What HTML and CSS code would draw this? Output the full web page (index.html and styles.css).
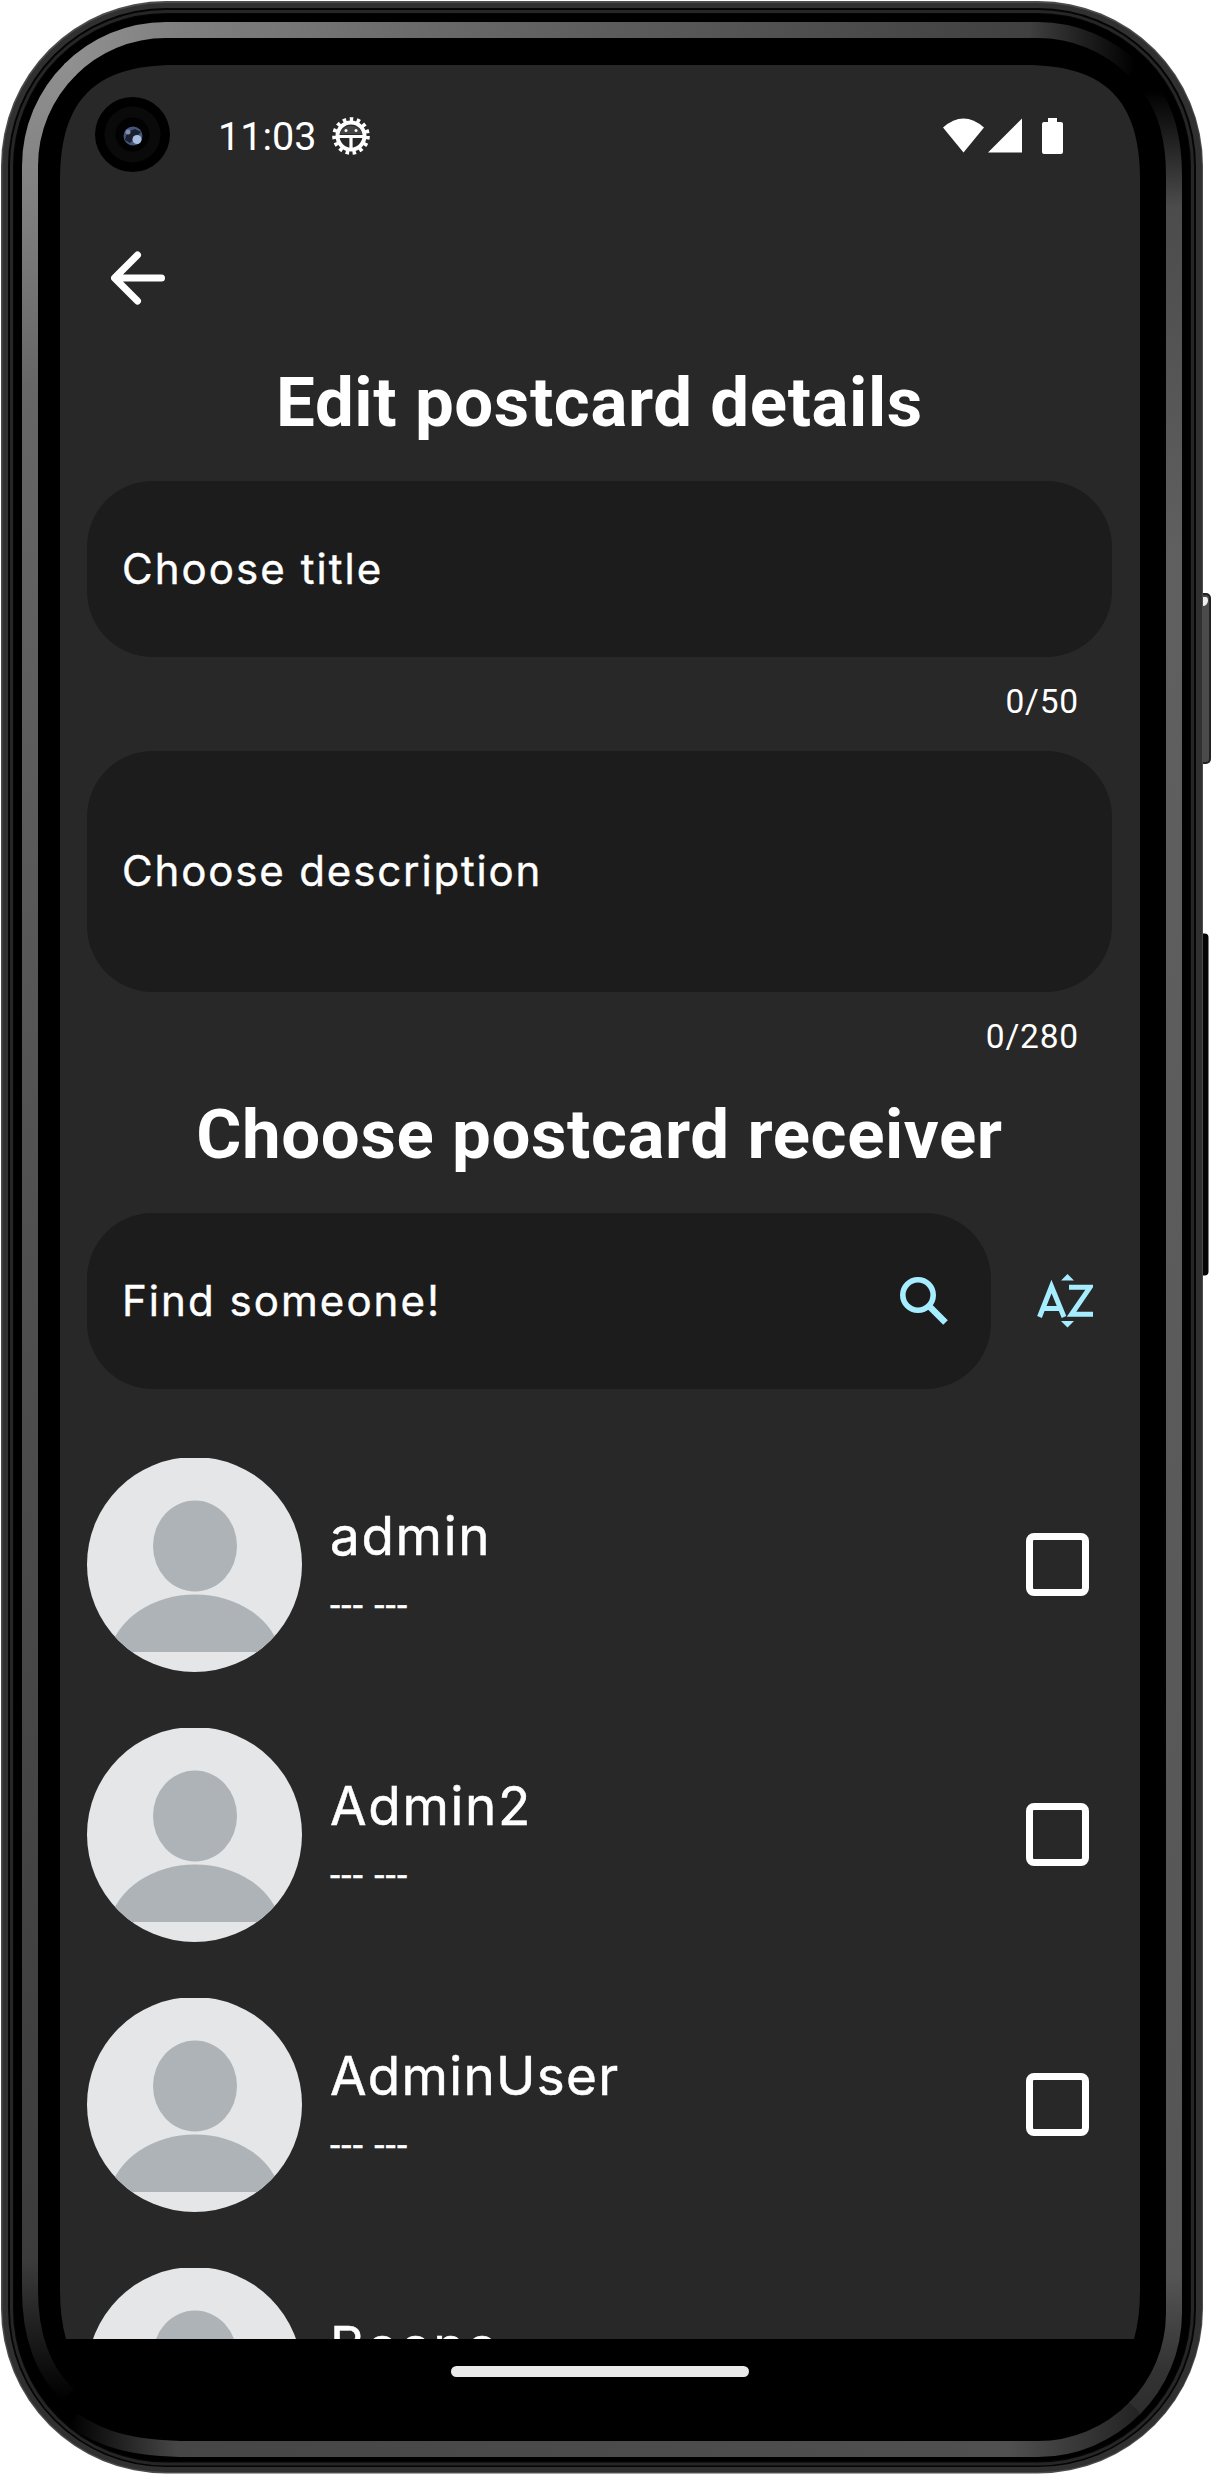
FILE: index.html
```html
<!DOCTYPE html>
<html lang="en">
<head>
<meta charset="utf-8">
<title>Edit postcard details</title>
<link rel="stylesheet" href="styles.css">
</head>
<body>
<svg width="0" height="0" class="defs" aria-hidden="true">
  <symbol id="avatar" viewBox="0 0 215 215">
    <rect y="1" width="215" height="214" fill="#e4e6e8"/>
    <ellipse cx="108" cy="89" rx="42" ry="45.500" fill="#aeb3b7"/>
    <path d="M22.400 194.500A87 70 0 0 1 193.600 194.500Z" transform="translate(0 .5)" fill="#aeb3b7"/>
  </symbol>
</svg>
<div class="phone">
  <svg class="frame" viewBox="0 0 1211 2474" aria-hidden="true">
    <defs>
      <linearGradient id="gl" gradientUnits="userSpaceOnUse" x1="0" y1="60" x2="0" y2="2400">
        <stop offset="0" stop-color="#909090"/><stop offset=".06" stop-color="#808080"/><stop offset=".14" stop-color="#666"/><stop offset=".5" stop-color="#505050"/><stop offset=".94" stop-color="#3c3c3c"/><stop offset="1" stop-color="#000"/>
      </linearGradient>
      <linearGradient id="gt" gradientUnits="userSpaceOnUse" x1="70" y1="0" x2="1135" y2="0">
        <stop offset="0" stop-color="#909090"/><stop offset=".1" stop-color="#808080"/><stop offset=".35" stop-color="#686868"/><stop offset=".7" stop-color="#4e4e4e"/><stop offset=".9" stop-color="#404040"/><stop offset="1" stop-color="#000"/>
      </linearGradient>
      <linearGradient id="gr" gradientUnits="userSpaceOnUse" x1="0" y1="90" x2="0" y2="2440">
        <stop offset="0" stop-color="#000"/><stop offset=".05" stop-color="#4c4c4c"/><stop offset=".2" stop-color="#606060"/><stop offset=".93" stop-color="#555"/><stop offset=".97" stop-color="#333"/><stop offset="1" stop-color="#2a2a2a"/>
      </linearGradient>
      <linearGradient id="gb" gradientUnits="userSpaceOnUse" x1="70" y1="0" x2="1135" y2="0">
        <stop offset="0" stop-color="#000"/><stop offset=".1" stop-color="#464646"/><stop offset=".88" stop-color="#505050"/><stop offset="1" stop-color="#242424"/>
      </linearGradient>
    </defs>
    <rect x="1198" y="594" width="12" height="169" rx="4" fill="#4a4a4a" stroke="#222" stroke-width="2"/>
    <path d="M1203 597h3q2 0 2 4-1 5-5 5z" fill="#eee"/>
    <rect x="1196" y="933.500" width="12.500" height="342" rx="4" fill="#050505"/>
    <rect x="1" y="1" width="1202" height="2472.500" rx="165" fill="#4c4c4c"/>
    <rect x="2.500" y="3" width="1199.500" height="2469" rx="163" fill="#303030"/>
    <rect x="8" y="8" width="1188" height="2459" rx="158" fill="#050505"/>
    <rect x="11.500" y="11.500" width="1181" height="2452.500" rx="154.500" fill="none" stroke="#262626" stroke-width="3"/>
    <rect x="14" y="14" width="1176" height="2447" rx="152" fill="#000"/>
    <g fill="none" stroke-width="16">
      <path d="M71 68.700A136 136 0 0 0 30 166V2290C30 2335 42 2370 68 2395" stroke="url(#gl)"/>
      <path d="M69.500 70.200A136 136 0 0 1 166 30H1038A136 136 0 0 1 1134 69.800" stroke="url(#gt)"/>
      <path d="M1150 88C1166 110 1174 140 1174 175V2313A136 136 0 0 1 1134 2409" stroke="url(#gr)"/>
      <path d="M73 2420C102 2440 135 2449 190 2449H1038A136 136 0 0 0 1135 2408" stroke="url(#gb)"/>
    </g>
    <path d="M60 180C60 100 95 65 175 65H1025C1105 65 1140 100 1140 180V2290Q1140 2318 1134 2339H66Q60 2318 60 2290Z" fill="#282828"/>
    <circle cx="132.500" cy="134.500" r="37.500" fill="#000"/>
    <circle cx="132.500" cy="134.500" r="28" fill="#0a0a0a"/>
    <circle cx="132.500" cy="134.500" r="17" fill="#020202"/>
    <circle cx="133" cy="136" r="9.500" fill="#46557a"/>
    <path d="M125 140q1-9 10-11l6 3-11 11z" fill="#1b2030"/>
    <circle cx="137" cy="139.500" r="4.500" fill="#a9bde0"/>
    <circle cx="128" cy="132" r="2.500" fill="#7f8dae"/>
  </svg>

  <main class="screen">
    <header class="status">
      <span class="clock">11:03</span>
      <svg class="bug" viewBox="0 0 40 40">
        <circle cx="20" cy="20" r="16.800" fill="none" stroke="#fff" stroke-width="4" stroke-dasharray="3.500 3.537"/>
        <circle cx="20" cy="20" r="13.500" fill="none" stroke="#fff" stroke-width="4"/>
        <path d="M8 20.500h24M20 20v13" stroke="#fff" stroke-width="3.200"/>
        <path d="M9 18a11.500 11.500 0 0 1 22 0z" fill="#444"/>
        <circle cx="15" cy="14.500" r="1.500" fill="#fff"/><circle cx="25" cy="14.500" r="1.500" fill="#fff"/>
      </svg>
      <svg class="signals" viewBox="0 0 121 37">
        <path d="M0 9.500Q20.500-8.500 41 9.500L20.500 34.500Z" fill="#fff"/>
        <path d="M45 34.500 79 .500V34.500Z" fill="#fff"/>
        <path d="M105 0h9v4h4q2 0 2 2v28q0 2-2 2h-17q-2 0-2-2V6q0-2 2-2h4z" fill="#fff"/>
      </svg>
    </header>
    <nav class="toolbar">
      <svg class="back" viewBox="0 0 54 54"><path d="M50.500 27H4M26.500 4 3.500 27l23 23" fill="none" stroke="#fff" stroke-width="7" stroke-linecap="round" stroke-linejoin="round"/></svg>
    </nav>
    <h1 class="heading">Edit postcard details</h1>
    <div class="field"><span class="label">Choose title</span></div>
    <p class="counter">0/50</p>
    <div class="field tall"><span class="label desc">Choose description</span></div>
    <p class="counter second">0/280</p>
    <h1 class="heading">Choose postcard receiver</h1>
    <div class="search-row">
      <div class="field search">
        <span class="label">Find someone!</span>
        <svg class="glass" viewBox="0 0 49 49"><circle cx="18" cy="18" r="15.200" fill="none" stroke="#a6edff" stroke-width="5.600"/><path d="M30 30 45.500 45.500" stroke="#a6edff" stroke-width="6.500"/><path d="M27 27h5v5h-5z" fill="#a6edff"/></svg>
      </div>
      <svg class="sort" viewBox="0 0 56 54"><g fill="#a6edff"><path d="M24 6.500 30.500 0 37 6.500ZM24 47h13l-6.500 6.500Z"/></g><g fill="none" stroke="#a6edff" stroke-width="5"><path d="M2.500 43 14.500 12.500 27 43M7 34.500h15.500"/><path d="M32 13.300H53L34.500 40.300H56"/></g></svg>
    </div>
    <ul class="people">
      <li class="person"><svg class="avatar"><use href="#avatar"/></svg><div class="info"><span class="name">admin</span><span class="sub">--- ---</span></div><span class="box"></span></li>
      <li class="person"><svg class="avatar"><use href="#avatar"/></svg><div class="info"><span class="name">Admin2</span><span class="sub">--- ---</span></div><span class="box"></span></li>
      <li class="person"><svg class="avatar"><use href="#avatar"/></svg><div class="info"><span class="name long">AdminUser</span><span class="sub">--- ---</span></div><span class="box"></span></li>
      <li class="person"><svg class="avatar"><use href="#avatar"/></svg><div class="info"><span class="name">Boono</span></div></li>
    </ul>
  </main>
  <footer class="gesture"><span class="pill"></span></footer>
</div>
</body>
</html>
```
FILE: styles.css
```css
* { box-sizing: border-box; margin: 0; padding: 0; }
body { background: #fff; color: #fff; font-family: Roboto, sans-serif; }
.defs { position: absolute; }
.phone { position: relative; width: 1211px; height: 2474px; padding: 65px 71px 0 60px; overflow: hidden; }
.frame { position: absolute; inset: 0; width: 1211px; height: 2474px; }
.screen { position: relative; height: 2274px; overflow: hidden; padding: 0 28px 0 27px; }
.status { display: flex; height: 144px; padding: 0 48px 0 131px; align-items: center; }
.clock { font-size: 39.500px; line-height: 46px; }
.bug { width: 40px; height: 40px; margin: -2px 0 0 15px; }
.signals { width: 121px; height: 37px; margin-left: auto; margin-top: -1px; }
.toolbar { height: 136px; padding: 42px 0 0 24px; }
.back { display: block; width: 54px; height: 54px; }
.heading { height: 136px; padding-top: 18px; text-align: center; font-size: 69px; line-height: 80px; font-weight: 700; letter-spacing: .6px; white-space: nowrap; }
.field { display: flex; align-items: center; height: 176px; border-radius: 66px; background: #1c1c1c; padding: 0 36px 0 35px; }
.label { font-family: Inter, sans-serif; font-size: 42px; line-height: 50px; letter-spacing: 2.050px; margin-top: -1px; white-space: nowrap; -webkit-text-stroke: .4px #fff; }
.desc { letter-spacing: 1.850px; }
.counter { height: 94px; padding: 24px 33px 0 0; text-align: right; font-size: 33.500px; line-height: 42px; letter-spacing: .8px; }
.tall { height: 241px; }
.second { height: 85px; }
.search-row { display: flex; align-items: center; }
.search { width: 904px; justify-content: space-between; padding-right: 42px; }
.glass { width: 49px; height: 49px; }
.sort { width: 56px; height: 54px; margin-left: 46px; }
.people { list-style: none; padding-top: 68px; }
.person { display: flex; height: 215px; margin-bottom: 55px; }
.avatar { width: 215px; height: 215px; border-radius: 50%; flex: none; }
.info { display: flex; flex-direction: column; flex: 1; padding: 47px 0 0 28px; }
.name { font-family: Inter, sans-serif; font-size: 53px; line-height: 64px; letter-spacing: 1.700px; white-space: nowrap; -webkit-text-stroke: .5px #fff; }
.long { letter-spacing: 1.300px; }
.sub { font-size: 37px; line-height: 42px; letter-spacing: 1.100px; margin-top: 17px; -webkit-text-stroke: .4px #fff; }
.box { width: 63px; height: 63px; border: 7.500px solid #fff; border-radius: 8px; margin: 76px 23px 0 0; }
.gesture { position: relative; display: flex; justify-content: center; padding-top: 27px; }
.pill { width: 298px; height: 11px; border-radius: 6px; background: #eaeaea; }
```
